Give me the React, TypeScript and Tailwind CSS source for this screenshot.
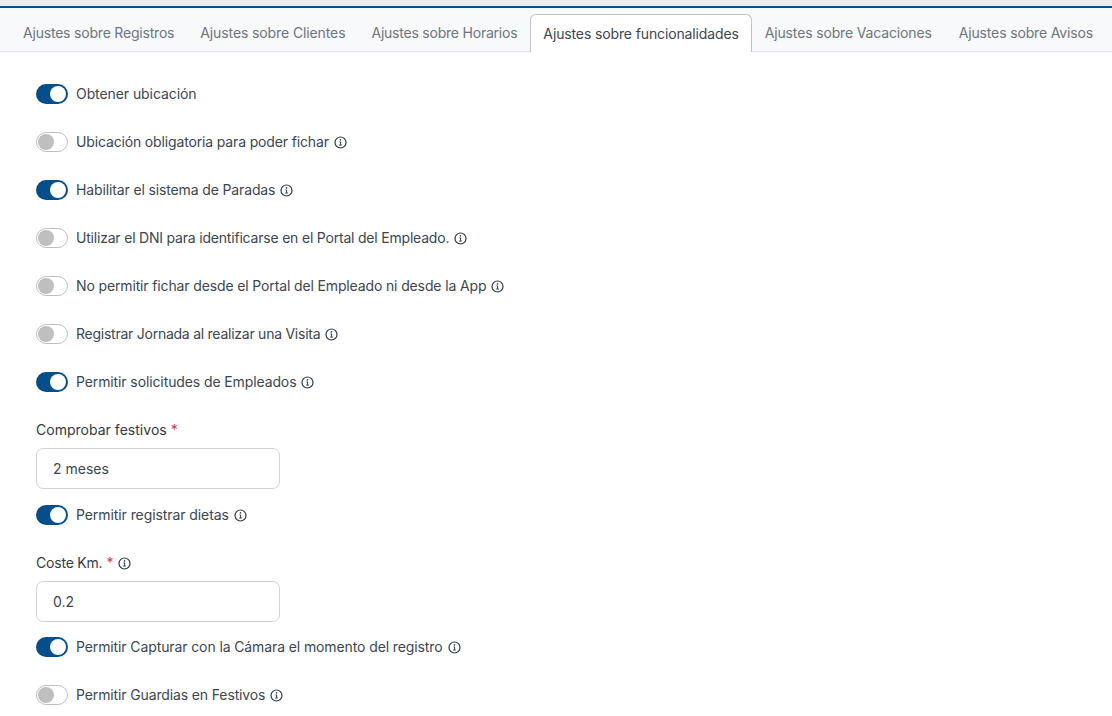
import React from "react";

const Info = () => (
  <svg width="13" height="13" viewBox="0 0 13 13" fill="none" className="shrink-0 text-[#2a3a48]">
    <circle cx="6.5" cy="6.5" r="5.5" stroke="currentColor" strokeWidth="1.2" />
    <path d="M5.5 5.9h1.1v3M5.2 9h2.6" stroke="currentColor" strokeWidth="1" />
    <circle cx="6.5" cy="3.9" r="0.8" fill="currentColor" />
  </svg>
);

const Toggle = ({ on }: { on: boolean }) =>
  on ? (
    <span className="flex h-5 w-8 shrink-0 items-center justify-end rounded-full bg-[#044e8b] pr-[2px]">
      <span className="h-4 w-4 rounded-full bg-white" />
    </span>
  ) : (
    <span className="flex h-5 w-8 shrink-0 items-center rounded-full border border-[#bfbfbf] bg-white pl-[1px]">
      <span className="h-4 w-4 rounded-full bg-[#bfbfbf]" />
    </span>
  );

const Row = ({ on, label, track, info = true }: { on: boolean; label: string; track: string; info?: boolean }) => (
  <div className="mb-7 flex h-5 items-center">
    <Toggle on={on} />
    <span className={`ml-2 text-[14px] leading-5 text-[#3c4650] ${track}`}>{label}</span>
    {info && <span className="ml-[5px]"><Info /></span>}
  </div>
);

const Field = ({ label, value, track, gap, info = false }: { label: string; value: string; track: string; gap: string; info?: boolean }) => (
  <div className={gap}>
    <div className={`mb-2 flex h-5 items-center text-[14px] leading-5 text-[#343a40] ${track}`}>
      {label}
      <span className="ml-1 text-[#dc3545]">*</span>
      {info && <span className="ml-[5px]"><Info /></span>}
    </div>
    <input
      readOnly
      value={value}
      className="block h-[41px] w-[244px] rounded-[7px] border border-[#ced4da] bg-white px-4 pb-px text-[14px] text-[#3c4650] outline-none"
    />
  </div>
);

const tabs = [
  { t: "Ajustes sobre Registros", k: "tracking-[-0.2px]" },
  { t: "Ajustes sobre Clientes", k: "tracking-[-0.11px]" },
  { t: "Ajustes sobre Horarios", k: "tracking-[-0.22px]" },
  { t: "Ajustes sobre funcionalidades", k: "tracking-[-0.13px]" },
  { t: "Ajustes sobre Vacaciones", k: "tracking-[-0.15px]" },
  { t: "Ajustes sobre Avisos", k: "ml-px tracking-[-0.15px]" },
];

export default function App() {
  return (
    <div className="h-[716px] w-[1112px] overflow-hidden bg-white font-['Inter','Liberation_Sans',sans-serif]">
      <div className="h-[6px] bg-[#e9eeee]" />
      <div className="h-[2px] bg-[#044e8b]" />
      <div className="flex h-[44px] border-b border-[#dee2e6] bg-[#f8f9fa] pl-[10px] pt-[6px]">
        {tabs.map(({ t, k }, i) => (
          <div
            key={t}
            className={
              i === 3
                ? `-mb-px flex h-[38px] items-center whitespace-nowrap rounded-t-md border border-b-0 border-[#bfc3c7] bg-white px-3 text-[14px] text-[#3c4650] ${k}`
                : `flex h-[37px] items-center whitespace-nowrap border border-transparent px-3 text-[14px] text-[#6c757d] ${k}`
            }
          >
            {t}
          </div>
        ))}
      </div>
      <div className="flex flex-col px-9 pt-8">
        <Row on label="Obtener ubicación" info={false} track="tracking-[-0.08px]" />
        <Row on={false} label="Ubicación obligatoria para poder fichar" track="tracking-[-0.15px]" />
        <Row on label="Habilitar el sistema de Paradas" track="tracking-[-0.135px]" />
        <Row on={false} label="Utilizar el DNI para identificarse en el Portal del Empleado." track="tracking-[-0.2px]" />
        <Row on={false} label="No permitir fichar desde el Portal del Empleado ni desde la App" track="tracking-[-0.136px]" />
        <Row on={false} label="Registrar Jornada al realizar una Visita" track="tracking-[-0.25px]" />
        <Row on label="Permitir solicitudes de Empleados" track="tracking-[-0.11px]" />
        <Field label="Comprobar festivos" value="2 meses" track="tracking-[0.02px]" gap="mb-4" />
        <Row on label="Permitir registrar dietas" track="tracking-[-0.08px]" />
        <Field label="Coste Km." value="0.2" info track="tracking-[-0.2px]" gap="mb-[15px]" />
        <Row on label="Permitir Capturar con la Cámara el momento del registro" track="tracking-[-0.11px]" />
        <Row on={false} label="Permitir Guardias en Festivos" track="tracking-[-0.13px]" />
      </div>
    </div>
  );
}
